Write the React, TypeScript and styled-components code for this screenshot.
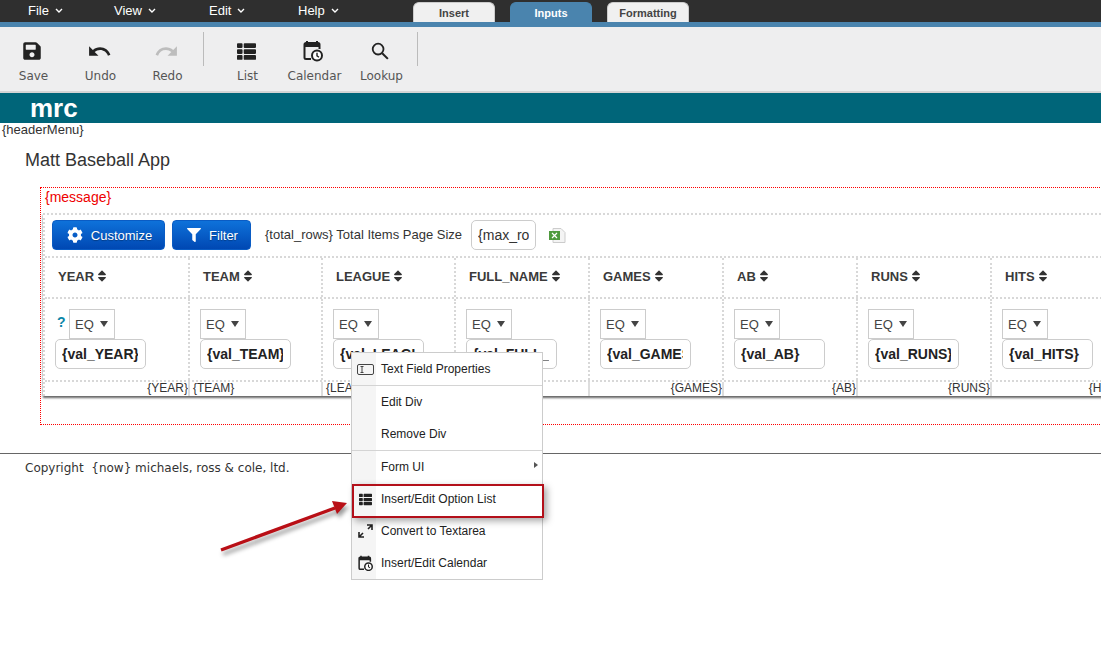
import React from "react";
import styled, { createGlobalStyle } from "styled-components";
import { FaSave, FaThList, FaCog, FaFilter, FaSort } from "react-icons/fa";
import { MdUndo, MdRedo } from "react-icons/md";

const Global = createGlobalStyle`
  html, body { margin: 0; padding: 0; background: #fff; }
  body { width: 1101px; height: 654px; overflow: hidden; font-family: "Liberation Sans", Arial, sans-serif; color: #333; }
`;
const Page = styled.div`position: relative; width: 1101px; height: 654px; overflow: hidden;`;

const MenuBar = styled.div`display: flex; align-items: flex-end; height: 22px; background: #2f2f2f; padding-left: 28px;`;
const MenuItem = styled.div<{ $w: number }>`
  width: ${p => p.$w}px; height: 22px; display: flex; align-items: center; gap: 6px;
  color: #fff; font-size: 13px; padding-bottom: 1px; box-sizing: border-box;
`;
const Tabs = styled.div`display: flex; gap: 15px;`;
const Tab = styled.div<{ $active?: boolean }>`
  width: 82px; height: 20px; box-sizing: border-box; display: flex; align-items: center; justify-content: center;
  border-radius: 6px 6px 0 0; font-size: 11px; font-weight: bold;
  background: ${p => (p.$active ? "#4a84ae" : "#f0f0f0")};
  color: ${p => (p.$active ? "#fff" : "#444")};
  border: 1px solid ${p => (p.$active ? "#4a84ae" : "#ccc")}; border-bottom: 0;
`;
const Strip = styled.div`height: 5px; background: #4a84ae;`;
const Toolbar = styled.div`
  display: flex; height: 66px; box-sizing: border-box; background: #eeeeef; border-bottom: 2px solid #d4d4d4; padding-top: 5px;
`;
const ToolGroup = styled.div<{ $pad?: number }>`display: flex; padding-left: ${p => p.$pad ?? 0}px;`;
const Tool = styled.div<{ $off?: boolean }>`
  width: 67px; height: 58px; display: flex; flex-direction: column; align-items: center;
  font-family: "DejaVu Sans", sans-serif; font-size: 12px; color: #555;
  svg { color: ${p => (p.$off ? "#bdbdbd" : "#222")}; }
`;
const ToolIcon = styled.div`height: 32px; margin-top: 3px; padding-right: 3px; display: flex; align-items: center; justify-content: center;`;
const ToolLabel = styled.div`margin-top: 2px; line-height: 14px; white-space: nowrap;`;
const ToolSep = styled.div`width: 1px; height: 34px; background: #bbb; margin-left: 2px; margin-right: 0;`;

const Brand = styled.div`
  height: 30px; background: #006579; color: #fff; font-size: 26px; font-weight: bold; line-height: 31px; padding-left: 30px;
`;
const HeaderMenu = styled.div`font-size: 13px; line-height: 14px; padding-left: 2px; height: 14px; color: #333;`;
const Title = styled.div`font-size: 18px; line-height: 22px; margin: 12px 0 0 25px; color: #333;`;

const RedBox = styled.div`
  margin: 16px 0 0 40px; width: 1200px; height: 238px; box-sizing: border-box; border: 1px dotted #f00; padding-left: 2px;
`;
const Message = styled.div`height: 25px; color: #e00; font-size: 14px; line-height: 19px; padding-left: 2px;`;
const Table = styled.div`
  width: 1160px; border-left: 2px dotted #d8d8d8; border-top: 2px dotted #d8d8d8;
  box-shadow: 0 2px 2px #666;
`;
const TopRow = styled.div`
  display: flex; align-items: center; height: 41px; padding: 0 0 1px 7px; box-sizing: border-box;
  font-size: 13px; color: #333;
`;
const Btn = styled.div<{ $w: number }>`
  width: ${p => p.$w}px; height: 30px; margin-right: 7px; padding-left: 2px; box-sizing: border-box; border-radius: 4px;
  display: flex; align-items: center; justify-content: center; gap: 8px;
  background: linear-gradient(#0e72da, #0048b3); border: 1px solid #0a5cc4;
  color: #fff; font-size: 13px; text-shadow: 0 1px 1px rgba(0,0,0,.3);
`;
const TotalText = styled.span`margin: 0 0 2px 7px; white-space: nowrap;`;
const PageInput = styled.input`
  width: 65px; height: 30px; box-sizing: border-box; margin-left: 9px; padding: 0 6px;
  border: 1px solid #ccc; border-radius: 5px; font: 14px "Liberation Sans", sans-serif; color: #333; background: #fff; outline: 0;
`;
const Excel = styled.svg`margin-left: 13px;`;

const Row = styled.div<{ $h: number }>`
  display: grid; grid-template-columns: 145px 133px 133px 134px 134px 134px 134px 134px;
  height: ${p => p.$h}px; box-sizing: border-box; border-top: 2px dotted #d8d8d8;
`;
const HeadCell = styled.div`
  display: flex; align-items: center; gap: 1px; padding: 0 0 3px 13px; border-right: 2px dotted #d8d8d8;
  font-size: 13px; font-weight: bold; color: #3a3a3a;
  svg { color: #333; }
`;
const FilterCell = styled.div`padding: 10px 0 0 10px; border-right: 2px dotted #d8d8d8;`;
const FilterTop = styled.div`display: flex; align-items: center; height: 30px;`;
const Help = styled.span`
  width: 12px; margin-left: 2px; font-size: 14px; font-weight: bold; color: #0a86a8; line-height: 26px; align-self: flex-start;
`;
const OpSelect = styled.div`
  width: 46px; height: 30px; box-sizing: border-box; border: 1px solid #ccc; background: #fff;
  display: flex; align-items: center; justify-content: space-between; padding: 0 6px 0 5px;
  font-size: 13px; color: #444;
`;
const Caret = styled.span`width: 0; height: 0; border-left: 4px solid transparent; border-right: 4px solid transparent; border-top: 6px solid #444;`;
const ValInput = styled.input`
  display: block; width: 91px; height: 30px; box-sizing: border-box; padding: 0 7px 0 6px;
  border: 1px solid #ccc; border-radius: 5px; font: bold 14px "Liberation Sans", sans-serif; color: #222; background: #fff; outline: 0;
`;
const DataCell = styled.div<{ $right?: boolean }>`
  border-right: 2px solid #ddd; font-size: 12px; line-height: 13px; color: #333;
  text-align: ${p => (p.$right ? "right" : "left")}; padding: 0 0 0 3px; white-space: nowrap; overflow: hidden;
`;

const Footer = styled.div`margin-top: 28px; border-top: 1px solid #666; padding: 7px 0 0 25px; font-family: "DejaVu Sans", sans-serif; font-size: 12px; line-height: 15px; color: #333;`;

const ContextMenu = styled.div`
  position: absolute; left: 351px; top: 352px; width: 192px; box-sizing: border-box; border: 1px solid #ccc;
  background: linear-gradient(90deg, #f5f5f5 24px, #fff 24px); font-size: 12px; color: #222;
`;
const MenuRow = styled.div<{ $sep?: boolean }>`
  position: relative; height: 32px; box-sizing: content-box; display: flex; align-items: center;
  border-bottom: ${p => (p.$sep ? "1px solid #d4d4d4" : "0")};
`;
const MenuIcon = styled.div`width: 29px; padding-right: 2px; box-sizing: border-box; display: flex; justify-content: center; color: #222;`;
const SubArrow = styled.span`
  position: absolute; right: 4px; top: 11px; width: 0; height: 0;
  border-top: 3px solid transparent; border-bottom: 3px solid transparent; border-left: 4px solid #555;
`;
const Highlight = styled.div`
  position: absolute; left: 352px; top: 484px; width: 192px; height: 34px; box-sizing: border-box;
  border: 2px solid #b3101a; box-shadow: 3px 3px 7px rgba(0,0,0,.35);
`;
const Arrow = styled.svg`position: absolute; left: 210px; top: 490px; filter: drop-shadow(2px 4px 2px rgba(0,0,0,.4));`;

const CalendarIcon = ({ size }: { size: number }) => (
  <svg width={size} height={size * 1.1} viewBox="0 0 20 22" fill="none">
    <path d="M4 1v3M14 1v3" stroke="currentColor" strokeWidth="2" />
    <path d="M8 19H3a1.5 1.5 0 0 1-1.5-1.5V4.5A1.5 1.5 0 0 1 3 3h12a1.5 1.5 0 0 1 1.5 1.5V9" stroke="currentColor" strokeWidth="2" />
    <rect x="1.5" y="3" width="15" height="4" fill="currentColor" />
    <circle cx="14" cy="15.5" r="5" stroke="currentColor" strokeWidth="2" fill="#fff" />
    <path d="M14 12.8v3l2 1.4" stroke="currentColor" strokeWidth="1.4" />
  </svg>
);
const SearchIcon = () => (
  <svg width="18" height="18" viewBox="0 0 19 19" fill="none" stroke="currentColor">
    <circle cx="7.5" cy="7.5" r="5.7" strokeWidth="1.9" />
    <path d="M11.8 11.8l6 6" strokeWidth="2.2" />
  </svg>
);
const Chevron = () => (
  <svg width="8" height="5" viewBox="0 0 8 5" fill="none" stroke="#fff" strokeWidth="1.4"><path d="M1 1l3 3 3-3" /></svg>
);
const TextFieldIcon = () => (
  <svg width="17" height="11" viewBox="0 0 17 11" fill="none" stroke="#444">
    <rect x=".5" y=".5" width="16" height="10" rx="1.5" />
    <path d="M3.5 2.5h3M3.5 8.5h3M5 2.5v6" />
  </svg>
);
const ExpandIcon = () => (
  <svg width="15" height="14" viewBox="0 0 15 14" fill="none" stroke="#222" strokeWidth="1.6">
    <path d="M9 1h5v5M14 1L10 5M1 8v5h5M1 13l4-4" />
  </svg>
);

const columns = [
  { h: "YEAR", v: "{val_YEAR}", d: "{YEAR}", r: true },
  { h: "TEAM", v: "{val_TEAM}", d: "{TEAM}" },
  { h: "LEAGUE", v: "{val_LEAGUE}", d: "{LEAGUE}" },
  { h: "FULL_NAME", v: "{val_FULL_NAME}", d: "{FULL_NAME}" },
  { h: "GAMES", v: "{val_GAMES}", d: "{GAMES}", r: true },
  { h: "AB", v: "{val_AB}", d: "{AB}", r: true },
  { h: "RUNS", v: "{val_RUNS}", d: "{RUNS}", r: true },
  { h: "HITS", v: "{val_HITS}", d: "{HITS}", r: true },
];

export default function App() {
  return (
    <Page>
      <Global />
      <MenuBar>
        <MenuItem $w={86}>File <Chevron /></MenuItem>
        <MenuItem $w={95}>View <Chevron /></MenuItem>
        <MenuItem $w={89}>Edit <Chevron /></MenuItem>
        <MenuItem $w={115}>Help <Chevron /></MenuItem>
        <Tabs>
          <Tab>Insert</Tab>
          <Tab $active>Inputs</Tab>
          <Tab>Formatting</Tab>
        </Tabs>
      </MenuBar>
      <Strip />
      <Toolbar>
        <ToolGroup>
          <Tool><ToolIcon><FaSave size={20} /></ToolIcon><ToolLabel>Save</ToolLabel></Tool>
          <Tool><ToolIcon><MdUndo size={25} /></ToolIcon><ToolLabel>Undo</ToolLabel></Tool>
          <Tool $off><ToolIcon><MdRedo size={25} /></ToolIcon><ToolLabel>Redo</ToolLabel></Tool>
        </ToolGroup>
        <ToolSep />
        <ToolGroup $pad={10}>
          <Tool><ToolIcon><FaThList size={19} /></ToolIcon><ToolLabel>List</ToolLabel></Tool>
          <Tool><ToolIcon><CalendarIcon size={20} /></ToolIcon><ToolLabel>Calendar</ToolLabel></Tool>
          <Tool><ToolIcon><SearchIcon /></ToolIcon><ToolLabel>Lookup</ToolLabel></Tool>
        </ToolGroup>
        <ToolSep />
      </Toolbar>
      <Brand>mrc</Brand>
      <HeaderMenu>{"{headerMenu}"}</HeaderMenu>
      <Title>Matt Baseball App</Title>
      <RedBox>
        <Message>{"{message}"}</Message>
        <Table>
          <TopRow>
            <Btn $w={113}><FaCog size={16} /> Customize</Btn>
            <Btn $w={79}><FaFilter size={14} /> Filter</Btn>
            <TotalText>{"{total_rows} Total Items Page Size"}</TotalText>
            <PageInput readOnly value="{max_rows}" />
            <Excel width="17" height="15" viewBox="0 0 17 15">
              <path d="M4 .5h8l4 4v10H4z" fill="#f4f4f4" stroke="#ccc" />
              <rect x="0" y="3" width="11" height="9" fill="#4f9a3e" />
              <path d="M3 5l5 5M8 5l-5 5" stroke="#fff" strokeWidth="1.2" />
            </Excel>
          </TopRow>
          <Row $h={41}>
            {columns.map(c => (
              <HeadCell key={c.h}>{c.h}<FaSort size={14} /></HeadCell>
            ))}
          </Row>
          <Row $h={83}>
            {columns.map((c, i) => (
              <FilterCell key={c.h}>
                <FilterTop>
                  {i === 0 && <Help>?</Help>}
                  <OpSelect>EQ <Caret /></OpSelect>
                </FilterTop>
                <ValInput readOnly value={c.v} />
              </FilterCell>
            ))}
          </Row>
          <Row $h={16}>
            {columns.map(c => (
              <DataCell key={c.h} $right={c.r}>{c.d}</DataCell>
            ))}
          </Row>
        </Table>
      </RedBox>
      <Footer>Copyright&nbsp; {"{now}"} michaels, ross &amp; cole, ltd.</Footer>

      <ContextMenu>
        <MenuRow $sep><MenuIcon><TextFieldIcon /></MenuIcon>Text Field Properties</MenuRow>
        <MenuRow><MenuIcon />Edit Div</MenuRow>
        <MenuRow $sep><MenuIcon />Remove Div</MenuRow>
        <MenuRow><MenuIcon />Form UI<SubArrow /></MenuRow>
        <MenuRow><MenuIcon><FaThList size={13} /></MenuIcon>Insert/Edit Option List</MenuRow>
        <MenuRow><MenuIcon><ExpandIcon /></MenuIcon>Convert to Textarea</MenuRow>
        <MenuRow><MenuIcon><CalendarIcon size={15} /></MenuIcon>Insert/Edit Calendar</MenuRow>
      </ContextMenu>
      <Highlight />
      <Arrow width="145" height="70" viewBox="0 0 145 70">
        <path d="M11 60L125 18" stroke="#b90f16" strokeWidth="3.4" />
        <path d="M137 13L122 11L127 24Z" fill="#b90f16" />
      </Arrow>
    </Page>
  );
}
